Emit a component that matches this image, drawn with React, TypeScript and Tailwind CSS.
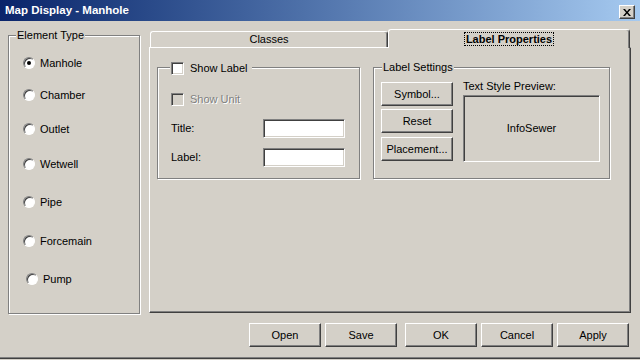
import type { ReactNode } from 'react';

// classic win2k bevels
const RAISED =
  'bg-[#d4d0c8] border border-t-white border-l-white border-r-[#404040] border-b-[#404040] shadow-[inset_-1px_-1px_0_#808080]';
const SUNKEN =
  'border border-t-[#808080] border-l-[#808080] border-r-white border-b-white shadow-[inset_1px_1px_0_#404040,inset_-1px_-1px_0_#d4d0c8]';
const ETCHED = 'border border-[#808080] shadow-[inset_1px_1px_0_#fff,1px_1px_0_#fff]';

function Btn({ children, className = '' }: { children: ReactNode; className?: string }) {
  return (
    <div className={`flex items-center justify-center ${RAISED} text-[11px] leading-none text-black ${className}`}>
      {children}
    </div>
  );
}

function Radio({ label, checked = false, className = '' }: { label: string; checked?: boolean; className?: string }) {
  return (
    <div className={`flex items-center h-[14px] ${className}`}>
      <span className="w-[12px] h-[12px] shrink-0 rounded-full border border-t-[#808080] border-l-[#808080] border-r-white border-b-white bg-white shadow-[inset_1px_1px_0_#404040] flex items-center justify-center">
        {checked && <span className="w-[4px] h-[4px] rounded-full bg-black" />}
      </span>
      <span className="ml-[5px] leading-[14px]">{label}</span>
    </div>
  );
}

function Check({ disabled = false }: { disabled?: boolean }) {
  return (
    <span className={`block w-[13px] h-[13px] shrink-0 ${SUNKEN} ${disabled ? 'bg-[#d4d0c8]' : 'bg-white'}`} />
  );
}

export default function App() {
  return (
    <div className="w-[640px] h-[360px] overflow-hidden bg-[#d4d0c8] flex flex-col text-[11px] text-black font-['Liberation_Sans',Arial,sans-serif]">
      {/* title bar */}
      <div className="h-[21px] shrink-0 flex items-start bg-linear-to-r from-[#0a246a] to-[#a6caf0]">
        <span className="pl-[5px] pt-[3px] text-white font-bold text-[11.5px] leading-[14px]">
          Map Display - Manhole
        </span>
        <div className={`ml-auto mr-[5px] mt-[5px] w-[16px] h-[14px] ${RAISED} flex items-center justify-center`}>
          <svg width="8" height="7" viewBox="0 0 8 7">
            <path d="M0 0h2l2 2.5L6 0h2L5 3.5 8 7H6L4 4.5 2 7H0l3-3.5z" fill="#000" />
          </svg>
        </div>
      </div>

      <div className="flex items-start">
        {/* Element Type */}
        <div className={`relative ml-[8px] mt-[14px] w-[132px] h-[279px] ${ETCHED} pl-[14px]`}>
          <span className="absolute -top-[8px] left-[7px] px-[1px] bg-[#d4d0c8] leading-[14px]">Element Type</span>
          <Radio label="Manhole" checked className="mt-[20px]" />
          <Radio label="Chamber" className="mt-[18px]" />
          <Radio label="Outlet" className="mt-[20px]" />
          <Radio label="Wetwell" className="mt-[21px]" />
          <Radio label="Pipe" className="mt-[24px]" />
          <Radio label="Forcemain" className="mt-[25px]" />
          <Radio label="Pump" className="mt-[24px] ml-[3px]" />
        </div>

        {/* tab control */}
        <div className="ml-[9px] mt-[8px] w-[482px] flex flex-col">
          <div className="h-[18px] flex items-end">
            <div className="ml-[1px] w-[238px] h-[16px] border-t border-l border-r border-t-white border-l-white border-r-[#404040] rounded-t-[3px] shadow-[inset_-1px_0_0_#808080] flex items-center justify-center leading-none">
              Classes
            </div>
            <div className="relative z-10 -mb-[1px] w-[242px] h-[19px] bg-[#d4d0c8] border-t border-l border-r border-t-white border-l-white border-r-[#404040] rounded-t-[3px] shadow-[inset_-1px_0_0_#808080] flex items-start justify-center pt-[2px]">
              <span className="border border-dotted border-black px-[1px] font-bold leading-[12px]">Label Properties</span>
            </div>
          </div>

          <div className={`w-[482px] h-[266px] ${RAISED} pt-[19px] pl-[7px] flex items-start`}>
            {/* Show Label group */}
            <div className={`relative w-[203px] h-[112px] ${ETCHED} pt-[25px] pl-[13px]`}>
              <div className="absolute -top-[6px] left-[12px] pl-[1px] pr-[4px] bg-[#d4d0c8] flex items-center h-[13px] gap-[6px]">
                <Check />
                <span className="leading-none">Show Label</span>
              </div>
              <div className="flex items-center h-[13px] gap-[6px]">
                <Check disabled />
                <span className="leading-none text-[#808080] [text-shadow:1px_1px_0_#fff]">Show Unit</span>
              </div>
              <div className="mt-[13px] flex items-center h-[19px]">
                <span className="w-[92px] leading-none">Title:</span>
                <span className={`w-[82px] h-[19px] bg-white ${SUNKEN}`} />
              </div>
              <div className="mt-[10px] flex items-center h-[19px]">
                <span className="w-[92px] leading-none">Label:</span>
                <span className={`w-[82px] h-[19px] bg-white ${SUNKEN}`} />
              </div>
            </div>

            {/* Label Settings group */}
            <div className={`relative ml-[13px] w-[237px] h-[112px] ${ETCHED} pt-[14px] pl-[7px] flex items-start`}>
              <span className="absolute -top-[8px] left-[8px] px-[1px] bg-[#d4d0c8] leading-[14px]">Label Settings</span>
              <div className="w-[72px] flex flex-col">
                <Btn className="h-[24px]">Symbol...</Btn>
                <Btn className="h-[24px] mt-[3px]">Reset</Btn>
                <Btn className="h-[24px] mt-[4px]">Placement...</Btn>
              </div>
              <div className="ml-[10px] flex flex-col -mt-[2px]">
                <span className="leading-[12px]">Text Style Preview:</span>
                <div className={`mt-[3px] w-[137px] h-[67px] ${SUNKEN} bg-[#d4d0c8] flex items-center justify-center leading-none`}>
                  InfoSewer
                </div>
              </div>
            </div>
          </div>
        </div>
      </div>

      {/* bottom buttons */}
      <div className="mt-[9px] flex justify-end pr-[11px]">
        <Btn className="w-[72px] h-[24px]">Open</Btn>
        <Btn className="w-[72px] h-[24px] ml-[4px]">Save</Btn>
        <Btn className="w-[72px] h-[24px] ml-[8px]">OK</Btn>
        <Btn className="w-[72px] h-[24px] ml-[4px]">Cancel</Btn>
        <Btn className="w-[72px] h-[24px] ml-[4px]">Apply</Btn>
      </div>

      <div className="mt-auto mb-[1px] h-[2px] border-t border-t-[#808080] border-b border-b-[#404040]" />
    </div>
  );
}
